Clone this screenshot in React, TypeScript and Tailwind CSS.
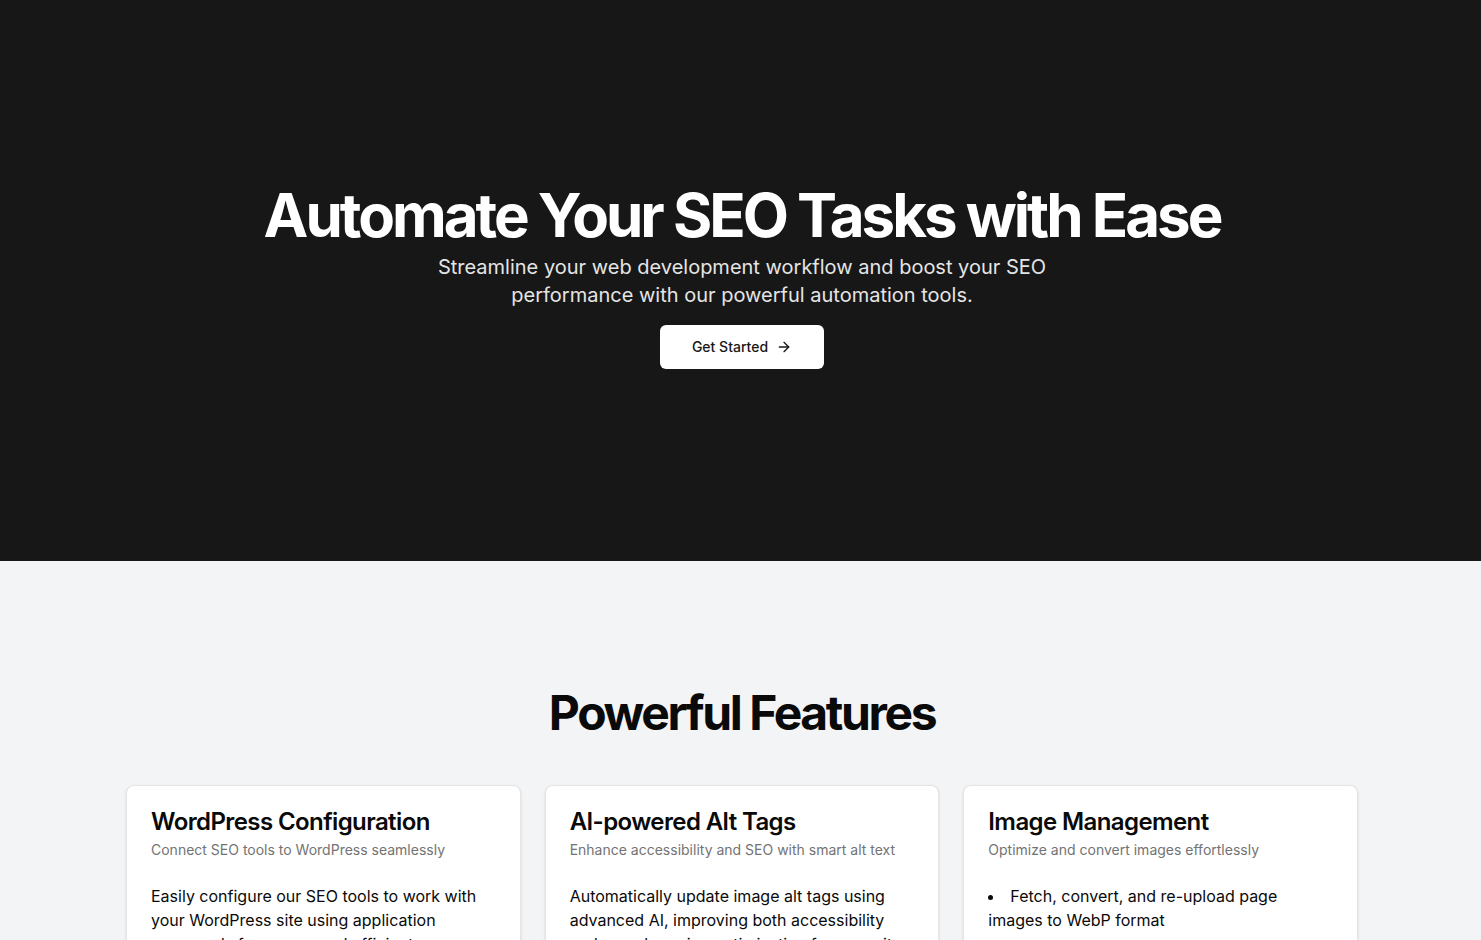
import { ArrowRight } from "lucide-react";

const features = [
  {
    title: "WordPress Configuration",
    description: "Connect SEO tools to WordPress seamlessly",
    body: "Easily configure our SEO tools to work with your WordPress site using application passwords for secure and efficient access.",
  },
  {
    title: "AI-powered Alt Tags",
    description: "Enhance accessibility and SEO with smart alt text",
    body: "Automatically update image alt tags using advanced AI, improving both accessibility and search engine optimization for your site.",
  },
];

export default function App() {
  return (
    <div className="min-h-screen w-full font-['Inter','Liberation_Sans',sans-serif]">
      {/* Hero */}
      <section className="h-[561px] w-full bg-[#171717] flex flex-col items-center justify-center pl-[3px] pb-[8px] text-center">
        <div className="space-y-2">
          <h1 className="text-6xl font-bold tracking-tighter text-white">
            Automate Your SEO Tasks with Ease
          </h1>
          <p className="mx-auto max-w-[700px] text-xl leading-7 text-[#e5e5e5]">
            Streamline your web development workflow and boost your SEO performance with our powerful automation tools.
          </p>
        </div>
        <button className="mt-4 h-11 px-8 rounded-md bg-white text-[#171717] text-sm font-medium flex items-center gap-2">
          Get Started
          <ArrowRight size={16} strokeWidth={2} />
        </button>
      </section>

      {/* Features */}
      <section className="w-full bg-[#f3f4f6] pt-32 pb-24 pl-[3px]">
        <h2 className="text-5xl leading-none font-bold tracking-tighter text-center text-[#0a0a0a]">
          Powerful Features
        </h2>
        <div className="mx-auto mt-12 max-w-[1232px] grid grid-cols-3 gap-6">
          {features.map((f) => (
            <div key={f.title} className="rounded-lg border border-[#e5e5e5] bg-white shadow-sm">
              <div className="p-6 flex flex-col space-y-1.5">
                <h3 className="text-2xl font-semibold leading-none tracking-tight text-[#0a0a0a]">{f.title}</h3>
                <p className="text-sm text-[#737373]">{f.description}</p>
              </div>
              <div className="p-6 pt-0">
                <p className="text-base text-[#0a0a0a]">{f.body}</p>
              </div>
            </div>
          ))}
          <div className="rounded-lg border border-[#e5e5e5] bg-white shadow-sm">
            <div className="p-6 flex flex-col space-y-1.5">
              <h3 className="text-2xl font-semibold leading-none tracking-tight text-[#0a0a0a]">Image Management</h3>
              <p className="text-sm text-[#737373]">Optimize and convert images effortlessly</p>
            </div>
            <div className="p-6 pt-0">
              <ul className="list-disc list-inside space-y-2 text-base text-[#0a0a0a]">
                <li>Fetch, convert, and re-upload page images to WebP format</li>
                <li>Optimize image sizes for faster loading</li>
                <li>Bulk processing for entire pages</li>
              </ul>
            </div>
          </div>
        </div>
      </section>
    </div>
  );
}
